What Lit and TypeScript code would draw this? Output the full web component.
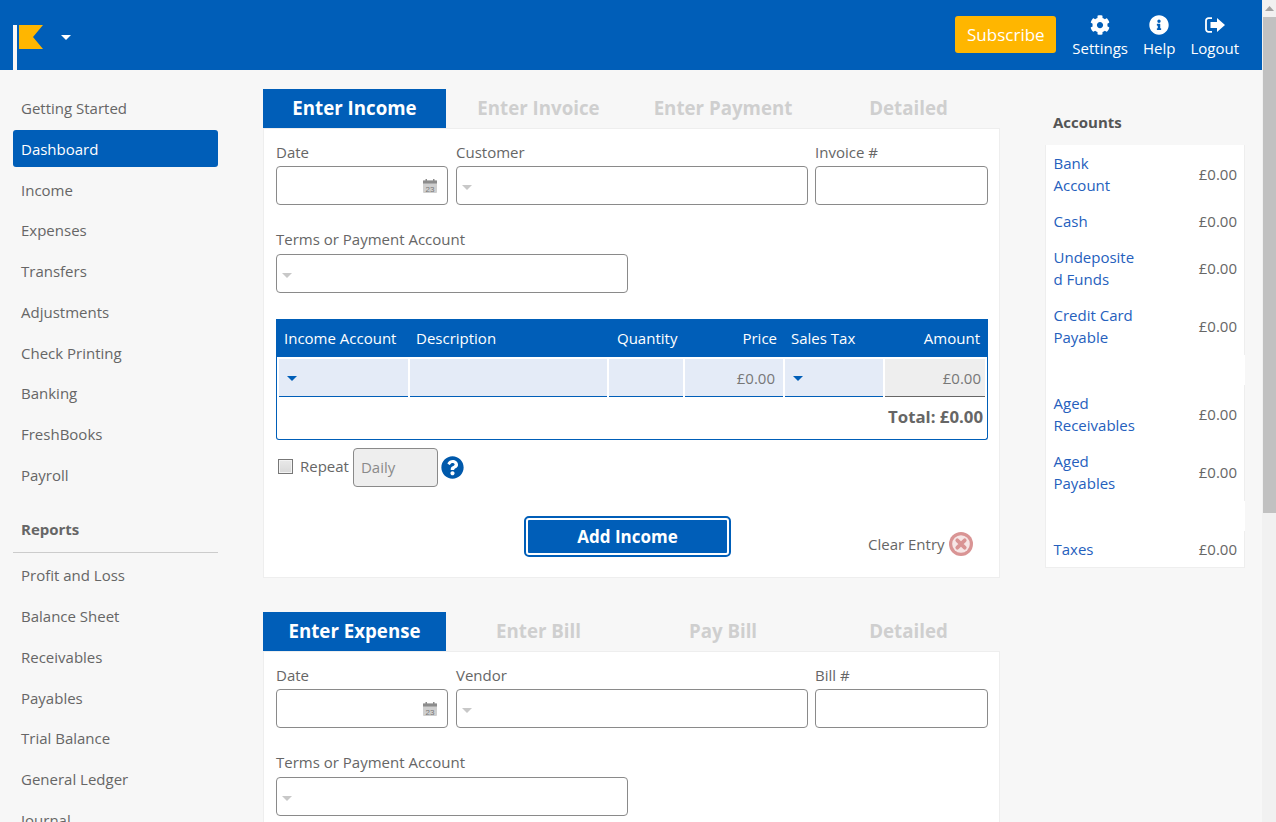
import { LitElement, html, css } from "lit";
import { customElement } from "lit/decorators.js";

const COG = "M487.4 315.7l-42.6-24.6c4.3-23.2 4.3-47 0-70.2l42.6-24.6c4.9-2.8 7.1-8.6 5.5-14-11.1-35.6-30-67.8-54.7-94.6-3.8-4.1-10-5.1-14.8-2.3L380.8 110c-17.9-15.4-38.5-27.3-60.8-35.1V25.8c0-5.6-3.9-10.5-9.4-11.7-36.7-8.2-74.3-7.8-109.2 0-5.5 1.2-9.4 6.1-9.4 11.7V75c-22.2 7.9-42.8 19.8-60.8 35.1L88.7 85.5c-4.9-2.8-11-1.9-14.8 2.3-24.7 26.7-43.6 58.9-54.7 94.6-1.7 5.4.6 11.2 5.5 14L67.3 221c-4.3 23.2-4.3 47 0 70.2l-42.6 24.6c-4.9 2.8-7.1 8.6-5.5 14 11.1 35.6 30 67.8 54.7 94.6 3.8 4.1 10 5.1 14.8 2.3l42.6-24.6c17.9 15.4 38.5 27.3 60.8 35.1v49.2c0 5.6 3.9 10.5 9.4 11.7 36.7 8.2 74.3 7.8 109.2 0 5.5-1.2 9.4-6.1 9.4-11.7v-49.2c22.2-7.9 42.8-19.8 60.8-35.1l42.6 24.6c4.9 2.8 11 1.9 14.8-2.3 24.7-26.7 43.6-58.9 54.7-94.6 1.5-5.5-.7-11.3-5.6-14.1zM256 336c-44.1 0-80-35.9-80-80s35.9-80 80-80 80 35.9 80 80-35.9 80-80 80z";
const INFO = "M256 8C119.043 8 8 119.083 8 256c0 136.997 111.043 248 248 248s248-111.003 248-248C504 119.083 392.957 8 256 8zm0 110c23.196 0 42 18.804 42 42s-18.804 42-42 42-42-18.804-42-42 18.804-42 42-42zm56 254c0 6.627-5.373 12-12 12h-88c-6.627 0-12-5.373-12-12v-24c0-6.627 5.373-12 12-12h12v-64h-12c-6.627 0-12-5.373-12-12v-24c0-6.627 5.373-12 12-12h64c6.627 0 12 5.373 12 12v100h12c6.627 0 12 5.373 12 12v24z";
const QUESTION = "M504 256c0 136.997-111.043 248-248 248S8 392.997 8 256C8 119.083 119.043 8 256 8s248 111.083 248 248zM262.655 90c-54.497 0-89.255 22.957-116.549 63.758-3.536 5.286-2.353 12.415 2.715 16.258l34.699 26.31c5.205 3.947 12.621 3.008 16.665-2.122 17.864-22.658 30.113-35.797 57.303-35.797 20.429 0 45.698 13.148 45.698 32.958 0 14.976-12.363 22.667-32.534 33.976C247.128 238.528 216 254.941 216 296v4c0 6.627 5.373 12 12 12h56c6.627 0 12-5.373 12-12v-1.333c0-28.462 83.186-29.647 83.186-106.667 0-58.002-60.165-102-116.531-102zM256 338c-25.365 0-46 20.635-46 46 0 25.364 20.635 46 46 46s46-20.636 46-46c0-25.365-20.635-46-46-46z";

const icon = (d: string, size: number, cls = "") => html`<svg class=${cls} width=${size} height=${size} viewBox="0 0 512 512"><path fill="currentColor" d=${d}></path></svg>`;
const caret = () => html`<svg class="caret" width="10" height="5" viewBox="0 0 10 5"><path d="M0 0h10L5 5z" fill="currentColor"></path></svg>`;

const nav1 = ["Getting Started", "Dashboard", "Income", "Expenses", "Transfers", "Adjustments", "Check Printing", "Banking", "FreshBooks", "Payroll"];
const nav2 = ["Profit and Loss", "Balance Sheet", "Receivables", "Payables", "Trial Balance", "General Ledger", "Journal"];
const accounts: (string | null)[] = ["Bank Account", "Cash", "Undeposited Funds", "Credit Card Payable", null, "Aged Receivables", "Aged Payables", null, "Taxes"];

@customElement("app-root")
export class AppRoot extends LitElement {
  static styles = css`
    :host { display: block; height: 822px; overflow: hidden; font-family: "Open Sans", sans-serif; font-size: 15px; color: #666; background: #f7f7f7; }
    * { box-sizing: border-box; }
    .shell { display: flex; height: 822px; }
    .page { width: 1262px; flex: none; height: 822px; overflow: hidden; }

    .scrollbar { width: 14px; flex: none; background: #f1f1f1; display: flex; flex-direction: column; align-items: stretch; padding-left: 1px; }
    .sb-up { height: 17px; display: flex; align-items: center; justify-content: center; color: #a3a3a3; flex: none; }
    .sb-thumb { height: 496px; background: #c1c1c1; }

    header { height: 70px; background: #005eb8; display: flex; align-items: flex-start; padding-left: 13px; color: #fff; }
    .pole { width: 4px; height: 45px; margin-top: 25px; background: #f7f7f7; flex: none; }
    .flag { margin-top: 25px; margin-left: 2px; flex: none; display: block; }
    .logo-caret { margin: 35px 0 0 18px; color: #fff; display: block; }
    .spacer { flex: 1; }
    .subscribe { margin-top: 16px; width: 101px; height: 37px; background: #ffb600; border-radius: 3px; font-size: 17px; color: #fff; display: flex; align-items: center; justify-content: center; }
    .hlinks { display: flex; margin: 15px 23px 0 16px; gap: 15px; }
    .hlink { display: flex; flex-direction: column; align-items: center; font-size: 15px; line-height: 22px; color: #fff; }
    .hlink svg { display: block; height: 20px; margin-bottom: 2px; }

    .body { display: flex; align-items: flex-start; }
    aside { width: 205px; margin: 19px 0 0 13px; flex: none; }
    .nav { height: 37px; margin-bottom: 3.78px; padding: 0 8px; line-height: 38px; border-radius: 3px; white-space: nowrap; }
    .nav.active { background: #005eb8; color: #fff; }
    .rep { font-weight: 700; margin-top: 24px; padding: 0 8px 11px; line-height: 24px; border-bottom: 1px solid #ccc; margin-bottom: 3.4px; color: #666; }

    main { width: 737px; margin: 19px 0 0 45px; flex: none; }
    .tabs { display: grid; grid-template-columns: 183px 185px 184px 185px; height: 39px; }
    .tab { font-size: 18.7px; font-weight: 700; line-height: 38px; text-align: center; color: #cfcfcf; }
    .tab:last-child { padding-left: 2px; }
    .tab.active { background: #005eb8; color: #fff; }
    .panel { background: #fff; border: 1px solid #eeeeee; padding: 12px 12px 0; height: 450px; margin-bottom: 34px; }

    .row { display: flex; gap: 8px; }
    .f { flex: none; }
    .f label { display: block; line-height: 22px; height: 25px; white-space: nowrap; }
    .box { height: 39px; border: 1px solid #8a8a8a; border-radius: 4px; background: #fff; display: flex; align-items: center; position: relative; }
    .caret { display: block; color: #c8c8c8; margin-left: 5px; margin-top: 3px; flex: none; }
    .cal { position: absolute; right: 10px; top: 12px; display: block; }
    .terms { margin-top: 24px; }
    .terms label { line-height: 20px; }
    .table { margin-top: 26px; width: 712px; height: 121px; border: 1px solid #005eb8; border-top: 0; border-radius: 0 0 3px 3px; }
    .thead, .tcells { display: grid; grid-template-columns: 129px 197px 74px 98px 98px 100px; column-gap: 2px; margin-left: -1px; margin-right: -1px; padding: 0 3px; }
    .thead { background: #005eb8; color: #fff; height: 38px; line-height: 38px; }
    .thead div { padding: 0 5px; white-space: nowrap; }
    .thead .c2 { padding-left: 6px; }
    .thead .c3 { padding-left: 8px; }
    .thead .c5 { padding-left: 6px; }
    .thead .r { text-align: right; padding-right: 6px; }
    .thead .c6 { padding-right: 5px; }
    .tcells { margin-top: 2px; }
    .cell { height: 38px; background: #e4ebf7; border-bottom: 1px solid #005eb8; display: flex; align-items: center; padding: 0 6px; }
    .cell.r { justify-content: flex-end; color: #777; padding-right: 8px; }
    .cell.ro { background: #eee; border-bottom-color: #666; padding-right: 4px; }
    .cell .caret { color: #005eb8; margin: 2px 0 0 2px; }
    .total { text-align: right; font-size: 16.8px; font-weight: 700; line-height: 40px; padding-right: 4px; color: #666; }
    .repeat { display: flex; align-items: center; margin-top: 8px; height: 39px; padding-left: 2px; }
    .check { width: 15px; height: 15px; border: 1px solid #777; background: linear-gradient(#e9e9e9, #d9d9d9); box-shadow: inset 0 0 0 1px #f3f3f3; margin: -3px 7px 0 0; flex: none; }
    .rlabel { margin-top: -3px; }
    .daily { width: 85px; height: 39px; margin-left: 4px; background: #eee; border: 1px solid #8a8a8a; border-radius: 4px; line-height: 36px; padding-left: 7px; color: #8a8a8a; flex: none; }
    .help { margin: 0 0 1px 3px; color: #0059ab; display: block; flex: none; }
    .actions { display: flex; margin-top: 29px; }
    .add { width: 207px; height: 41px; margin-left: 248px; border: 2px solid #005eb8; border-radius: 5px; padding: 2px; background: #fff; flex: none; }
    .add div { height: 100%; background: #005eb8; color: #fff; font-weight: 700; font-size: 17px; text-align: center; line-height: 33px; border-radius: 1px; }
    .clear { display: flex; align-items: center; gap: 4px; margin-left: 137px; margin-top: 15px; height: 26px; white-space: nowrap; flex: none; color: #666; }
    .clear svg { display: block; flex: none; }

    .right { width: 200px; margin: 40px 0 0 45px; flex: none; }
    .right h3 { margin: 0; font-size: 15px; font-weight: 700; line-height: 25px; padding-left: 8px; height: 35px; color: #555; }
    .card { background: #fff; border: 1px solid #eeeeee; border-top: 0; }
    .acc { display: flex; justify-content: space-between; align-items: center; padding: 7px 7px 7px 7.5px; line-height: 22px; }
    .acc .name { width: 86px; color: #2560bd; overflow-wrap: anywhere; }
    .blank { height: 30px; background: #fff; margin-right: -1px; }
  `;

  field(label: string, width: number, content: unknown = "", extra = "") {
    return html`<div class="f" style="width:${width}px;${extra}"><label>${label}</label><div class="box">${content}</div></div>`;
  }

  calendar() {
    return html`<svg class="cal" width="14" height="14" viewBox="0 0 14 14">
      <rect x="0" y="1.500" width="14" height="12.500" rx="1" fill="#cfcfcf"></rect>
      <rect x="0" y="1.500" width="14" height="3" fill="#8c8c8c"></rect>
      <rect x="2.500" y="0" width="1.500" height="3" fill="#8c8c8c"></rect>
      <rect x="10" y="0" width="1.500" height="3" fill="#8c8c8c"></rect>
      <text x="7" y="12.500" font-size="8" text-anchor="middle" fill="#777" font-family="Liberation Sans, sans-serif">23</text>
    </svg>`;
  }

  section(tabs: string[], a: string, b: string) {
    return html`
      <div class="tabs">${tabs.map((t, i) => html`<div class="tab ${i === 0 ? "active" : ""}">${t}</div>`)}</div>
      <div class="panel">
        <div class="row">
          ${this.field("Date", 172, this.calendar())}
          ${this.field(a, 352, caret())}
          ${this.field(b, 173, "", "margin-left:-1px")}
        </div>
        <div class="f terms" style="width:352px"><label>Terms or Payment Account</label><div class="box">${caret()}</div></div>
        ${tabs[0] === "Enter Income" ? this.details() : ""}
      </div>`;
  }

  details() {
    return html`
      <div class="table">
        <div class="thead">
          <div>Income Account</div><div class="c2">Description</div><div class="c3">Quantity</div><div class="r">Price</div><div class="c5">Sales Tax</div><div class="r c6">Amount</div>
        </div>
        <div class="tcells">
          <div class="cell">${caret()}</div><div class="cell"></div><div class="cell"></div>
          <div class="cell r">£0.00</div><div class="cell">${caret()}</div><div class="cell r ro">£0.00</div>
        </div>
        <div class="total">Total: £0.00</div>
      </div>
      <div class="repeat">
        <div class="check"></div><span class="rlabel">Repeat</span>
        <div class="daily">Daily</div>
        ${icon(QUESTION, 23, "help")}
      </div>
      <div class="actions">
        <div class="add"><div>Add Income</div></div>
        <div class="clear">Clear Entry
          <svg width="24" height="24" viewBox="0 0 24 24">
            <circle cx="12" cy="12" r="12" fill="#d99494"></circle>
            <circle cx="12" cy="12" r="8.800" fill="#f6e6e6"></circle>
            <path d="M8.300 8.300l7.400 7.400M15.700 8.300l-7.400 7.400" stroke="#d99494" stroke-width="3.800" stroke-linecap="round"></path>
          </svg>
        </div>
      </div>`;
  }

  render() {
    return html`<div class="shell">
      <div class="page">
        <header>
          <div class="pole"></div>
          <svg class="flag" width="24" height="24" viewBox="0 0 24 24"><path d="M0 0h24l-10 12 10 12H0z" fill="#ffb600"></path></svg>
          <svg class="logo-caret" width="10" height="5" viewBox="0 0 10 5"><path d="M0 0h10L5 5z" fill="currentColor"></path></svg>
          <div class="spacer"></div>
          <div class="subscribe">Subscribe</div>
          <div class="hlinks">
            <div class="hlink">${icon(COG, 20)}Settings</div>
            <div class="hlink">${icon(INFO, 20)}Help</div>
            <div class="hlink">
              <svg width="20" height="20" viewBox="0 0 20 20"><path d="M7 3.200H3.500A2.500 2.500 0 0 0 1 5.700v8.600a2.500 2.500 0 0 0 2.500 2.500H7" fill="none" stroke="currentColor" stroke-width="1.800"></path><path d="M12 3l8 7-8 7v-4H5.500V7H12z" fill="currentColor"></path></svg>
              Logout
            </div>
          </div>
        </header>
        <div class="body">
          <aside>
            ${nav1.map((n) => html`<div class="nav ${n === "Dashboard" ? "active" : ""}">${n}</div>`)}
            <div class="rep">Reports</div>
            ${nav2.map((n) => html`<div class="nav">${n}</div>`)}
          </aside>
          <main>
            ${this.section(["Enter Income", "Enter Invoice", "Enter Payment", "Detailed"], "Customer", "Invoice #")}
            ${this.section(["Enter Expense", "Enter Bill", "Pay Bill", "Detailed"], "Vendor", "Bill #")}
          </main>
          <div class="right">
            <h3>Accounts</h3>
            <div class="card">
              ${accounts.map((a) => a === null
                ? html`<div class="blank"></div>`
                : html`<div class="acc"><div class="name">${a}</div><div>£0.00</div></div>`)}
            </div>
          </div>
        </div>
      </div>
      <div class="scrollbar">
        <div class="sb-up"><svg width="9" height="5" viewBox="0 0 9 5"><path d="M0 5h9L4.500 0z" fill="currentColor"></path></svg></div>
        <div class="sb-thumb"></div>
      </div>
    </div>`;
  }
}
